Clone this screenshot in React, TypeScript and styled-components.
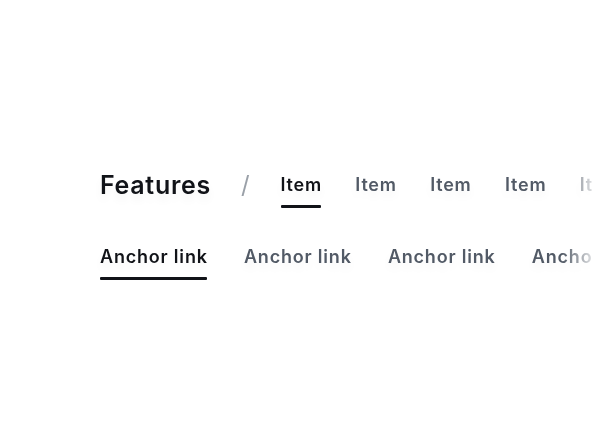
import React from "react";
import styled, { createGlobalStyle } from "styled-components";

const Global = createGlobalStyle`
  html, body { margin: 0; padding: 0; background: #ffffff; }
  body { font-family: Inter, "Noto Sans", sans-serif; -webkit-font-smoothing: antialiased; }
`;

const Page = styled.div`
  width: 592px;
  height: 444px;
  overflow: hidden;
  box-sizing: border-box;
  padding: 165px 0 0 100px;
  display: flex;
  flex-direction: column;
  gap: 32px;
  -webkit-mask-image: linear-gradient(to right, #000 0, #000 562px, rgba(0,0,0,0.2) 592px);
  mask-image: linear-gradient(to right, #000 0, #000 562px, rgba(0,0,0,0.2) 592px);
`;

const Bar = styled.nav`
  display: flex;
  align-items: center;
  white-space: nowrap;
`;

const Title = styled.span`
  font-size: 25px;
  font-weight: 600;
  color: #111318;
  letter-spacing: 0.7px;
  line-height: 40px;
  text-shadow: 0 6px 10px rgba(0, 0, 0, 0.05);
`;

const Slash = styled.span`
  font-size: 24px;
  color: #9aa0a8;
  margin: 0 31px 0 30px;
  line-height: 40px;
`;

const Tabs = styled.div<{ $gap: number }>`
  display: flex;
  gap: ${(p) => p.$gap}px;
`;

const Tab = styled.a<{ $active?: boolean }>`
  position: relative;
  display: block;
  font-size: 18px;
  font-weight: 600;
  line-height: 40px;
  letter-spacing: 0.8px;
  color: ${(p) => (p.$active ? "#111318" : "#525a66")};
  text-decoration: none;
  text-shadow: 0 6px 10px rgba(0, 0, 0, 0.05);
  &::after {
    content: "";
    position: absolute;
    left: 0;
    right: 0.8px;
    bottom: -3px;
    height: 3px;
    border-radius: 1px;
    background: ${(p) => (p.$active ? "#111318" : "transparent")};
  }
`;

export default function App() {
  return (
    <>
      <Global />
      <Page>
        <Bar>
          <Title>Features</Title>
          <Slash>/</Slash>
          <Tabs $gap={33.3}>
            <Tab $active>Item</Tab>
            <Tab>Item</Tab>
            <Tab>Item</Tab>
            <Tab>Item</Tab>
            <Tab>Item</Tab>
          </Tabs>
        </Bar>
        <Bar>
          <Tabs $gap={36.2}>
            <Tab $active>Anchor link</Tab>
            <Tab>Anchor link</Tab>
            <Tab>Anchor link</Tab>
            <Tab>Anchor link</Tab>
          </Tabs>
        </Bar>
      </Page>
    </>
  );
}
